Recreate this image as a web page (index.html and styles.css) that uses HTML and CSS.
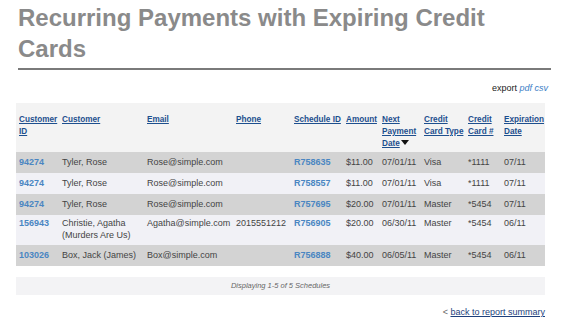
FILE: index.html
```html
<!DOCTYPE html>
<html>
<head>
<meta charset="utf-8">
<link rel="stylesheet" href="styles.css">
</head>
<body>
<div class="page">
  <h1 class="title">Recurring Payments with Expiring Credit Cards</h1>
  <div class="rule"></div>
  <div class="export">export <a href="#">pdf</a> <a href="#">csv</a></div>
  <table class="report">
    <thead>
      <tr>
        <th class="c1"><a href="#">Customer ID</a></th>
        <th class="c2"><a href="#">Customer</a></th>
        <th class="c3"><a href="#">Email</a></th>
        <th class="c4"><a href="#">Phone</a></th>
        <th class="c5"><a href="#">Schedule ID</a></th>
        <th class="c6"><a href="#">Amount</a></th>
        <th class="c7"><a href="#">Next Payment Date</a><svg class="sort" width="8" height="5" viewBox="0 0 8 5"><path d="M0 0H8L4 5Z" fill="#111"/></svg></th>
        <th class="c8"><a href="#">Credit Card Type</a></th>
        <th class="c9"><a href="#">Credit Card #</a></th>
        <th class="c10"><a href="#">Expiration Date</a></th>
      </tr>
    </thead>
    <tbody>
      <tr class="dark">
        <td><a class="id" href="#">94274</a></td><td>Tyler, Rose</td><td>Rose@simple.com</td><td></td>
        <td><a class="id" href="#">R758635</a></td><td>$11.00</td><td>07/01/11</td><td>Visa</td><td>*1111</td><td>07/11</td>
      </tr>
      <tr class="light">
        <td><a class="id" href="#">94274</a></td><td>Tyler, Rose</td><td>Rose@simple.com</td><td></td>
        <td><a class="id" href="#">R758557</a></td><td>$11.00</td><td>07/01/11</td><td>Visa</td><td>*1111</td><td>07/11</td>
      </tr>
      <tr class="dark">
        <td><a class="id" href="#">94274</a></td><td>Tyler, Rose</td><td>Rose@simple.com</td><td></td>
        <td><a class="id" href="#">R757695</a></td><td>$20.00</td><td>07/01/11</td><td>Master</td><td>*5454</td><td>07/11</td>
      </tr>
      <tr class="light tall">
        <td><a class="id" href="#">156943</a></td><td>Christie, Agatha (Murders Are Us)</td><td>Agatha@simple.com</td><td>2015551212</td>
        <td><a class="id" href="#">R756905</a></td><td>$20.00</td><td>06/30/11</td><td>Master</td><td>*5454</td><td>06/11</td>
      </tr>
      <tr class="dark">
        <td><a class="id" href="#">103026</a></td><td>Box, Jack (James)</td><td>Box@simple.com</td><td></td>
        <td><a class="id" href="#">R756888</a></td><td>$40.00</td><td>06/05/11</td><td>Master</td><td>*5454</td><td>06/11</td>
      </tr>
    </tbody>
  </table>
  <div class="pager">Displaying 1-5 of 5 Schedules</div>
  <div class="back">&lt; <a href="#">back to report summary</a></div>
</div>
</body>
</html>
```
FILE: styles.css
```css
html, body {
  margin: 0;
  padding: 0;
  background: #fff;
}
body {
  font-family: "Liberation Sans", Arial, sans-serif;
  color: #444;
}
.page {
  padding: 0 19px 0 16px;
}
.title {
  margin: 2px 0 0 2px;
  font-size: 24px;
  line-height: 31px;
  font-weight: bold;
  color: #8a8a8a;
}
.rule {
  margin: 4px -6px 0 2px;
  height: 2px;
  background: #7a7a7a;
}
.export {
  margin-top: 12px;
  text-align: right;
  font-size: 9px;
  line-height: 12px;
  color: #222;
  margin-right: -3px;
}
.export a {
  color: #3b7ec6;
  font-style: italic;
  text-decoration: none;
}
.report {
  margin-top: 9px;
  width: 529px;
  border-collapse: collapse;
  table-layout: fixed;
  font-size: 9px;
  line-height: 12px;
}
.report th {
  background: #f3f3f3;
  text-align: left;
  vertical-align: top;
  padding: 11px 0 2px 3px;
  height: 36px;
  font-size: 8.2px;
  font-weight: bold;
}
.report th a {
  color: #1d4f8e;
  text-decoration: underline;
}
.report .sort {
  margin-left: 1px;
  vertical-align: 1px;
}
.c1 { width: 40px; }
.c2 { width: 82px; }
.c3 { width: 86px; }
.c4 { width: 55px; }
.c5 { width: 49px; }
.c6 { width: 33px; }
.c7 { width: 39px; }
.c8 { width: 41px; }
.c9 { width: 33px; }
.c10 { width: 41px; }
.report td {
  vertical-align: top;
  padding: 4px 2px 5px 3px;
  color: #444;
}
.report tr.dark td { background: #d3d3d3; }
.report tr.light td { background: #f1f1f6; }
.report tr.tall td { padding-top: 2px; padding-bottom: 4px; }
.report a.id {
  color: #4a86c2;
  font-weight: bold;
  text-decoration: none;
}
.pager {
  margin-top: 11px;
  width: 529px;
  height: 18px;
  background: #f3f3f5;
  text-align: center;
  font-size: 7.5px;
  line-height: 18px;
  font-style: italic;
  color: #666;
}
.back {
  margin-top: 11px;
  width: 529px;
  text-align: right;
  font-size: 9px;
  line-height: 12px;
  color: #666;
}
.back a {
  color: #1d3f7c;
  text-decoration: underline;
}
```
